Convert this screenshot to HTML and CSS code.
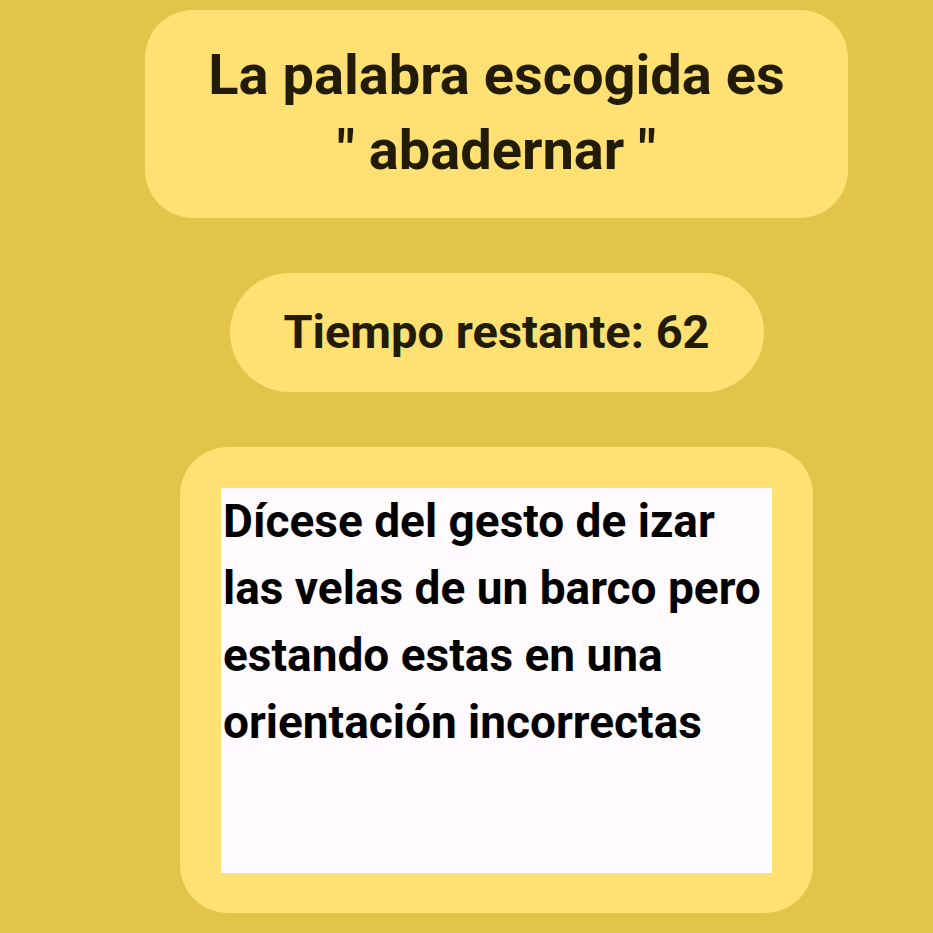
FILE: index.html
```html
<!DOCTYPE html>
<html lang="es">
<head>
<meta charset="utf-8">
<title>Palabra</title>
<link rel="stylesheet" href="styles.css">
</head>
<body>
<main class="screen">
  <section class="card word-card">
    <p class="word-text">La palabra escogida es<br>" abadernar "</p>
  </section>
  <section class="card timer-card">
    <p class="timer-text">Tiempo restante: 62</p>
  </section>
  <section class="card def-card">
    <div class="def-box">
      <p class="def-text">Dícese del gesto de izar las velas de un barco pero estando estas en una orientación incorrectas</p>
    </div>
  </section>
</main>
</body>
</html>
```

FILE: styles.css
```css
html, body {
  margin: 0;
  padding: 0;
  background: #e1c54b;
}
body {
  width: 933px;
  height: 933px;
  overflow: hidden;
  font-family: Roboto, "Liberation Sans", sans-serif;
  font-weight: 700;
}
p { margin: 0; }
.screen {
  box-sizing: border-box;
  width: 933px;
  height: 933px;
  padding: 10px 0 0 60px;
  display: flex;
  flex-direction: column;
  align-items: center;
  gap: 55px;
}
.card {
  background: #ffe072;
  box-sizing: border-box;
}
.word-card {
  width: 703px;
  height: 208px;
  border-radius: 48px;
  display: flex;
  align-items: center;
  justify-content: center;
  padding-bottom: 2px;
}
.word-text {
  font-size: 56px;
  line-height: 75px;
  color: #221b05;
  text-align: center;
}
.timer-card {
  width: 534px;
  height: 119px;
  border-radius: 60px;
  display: flex;
  align-items: center;
  justify-content: center;
  padding-bottom: 1px;
}
.timer-text {
  font-size: 47px;
  line-height: 56px;
  color: #221b05;
}
.def-card {
  width: 633px;
  height: 466px;
  border-radius: 48px;
  padding: 41px 41px 40px 41px;
}
.def-box {
  width: 551px;
  height: 385px;
  padding-left: 2px;
  box-sizing: border-box;
  background: #fffbfe;
}
.def-text {
  font-size: 46px;
  line-height: 67px;
  color: #000;
}
```
